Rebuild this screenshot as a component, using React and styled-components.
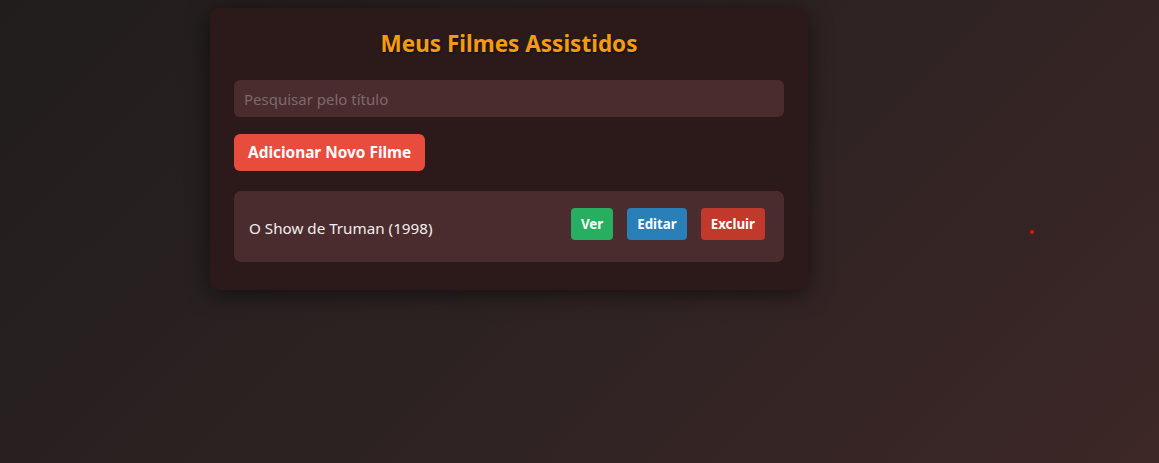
import React, { useState } from 'react'
import styled, { createGlobalStyle } from 'styled-components'

const GlobalStyle = createGlobalStyle`
    html, body {
        margin: 0;
        padding: 0;
        height: 100%;
    }
    body {
        background: linear-gradient(135deg, #211d1d 0%, #2c2222 45%, #3d2727 100%);
        font-family: "Noto Sans", "Open Sans", sans-serif;
        color: #f0e6e6;
    }
    #root {
        min-height: 100%;
    }
`

const Page = styled.div`
    position: relative;
    height: 463px;
    padding: 8px 0 0 210px;
    box-sizing: border-box;
`
const Container = styled.div`
    width: 598px;
    box-sizing: border-box;
    padding: 24px 24px 28px;
    background: #2c1a1b;
    border-radius: 9px;
    box-shadow: 0 4px 22px rgba(0, 0, 0, 0.55);
`
const Title = styled.h2`
    margin: -1px 0 23px;
    text-align: center;
    font-size: 22.5px;
    line-height: 26px;
    font-weight: 700;
    color: #f39c12;
    text-shadow: 1px 1px 2px rgba(0, 0, 0, 0.6);
`
const Search = styled.input`
    display: block;
    width: 100%;
    height: 37px;
    box-sizing: border-box;
    padding: 0 10px;
    border: none;
    border-radius: 6px;
    background: #4a2c2e;
    color: #f0e6e6;
    font-family: inherit;
    font-size: 15px;
    outline: none;
    &::placeholder {
        color: #7d6a6a;
    }
`
const AddButton = styled.button`
    display: block;
    margin: 17px 0 20px;
    height: 37px;
    padding: 0 14px;
    border: none;
    border-radius: 6px;
    background: #e74c3c;
    color: #fff;
    font-family: inherit;
    font-size: 15.4px;
    font-weight: 700;
    cursor: pointer;
`
const List = styled.div`
    display: flex;
    flex-direction: column;
    gap: 10px;
`
const Item = styled.div`
    display: flex;
    align-items: center;
    justify-content: space-between;
    height: 71px;
    box-sizing: border-box;
    padding: 0 19px 0 15px;
    background: #4a2c2e;
    border-radius: 7px;
`
const MovieName = styled.span`
    font-size: 15.2px;
    color: #f2ecec;
    padding-top: 2px;
`
const Actions = styled.div`
    display: flex;
    gap: 14px;
    margin-top: -6px;
`
const ActionButton = styled.button`
    height: 32px;
    padding: 0 10px;
    border: none;
    border-radius: 4px;
    background: ${props => props.color};
    color: #fff;
    font-family: inherit;
    font-size: 13.3px;
    font-weight: 700;
    cursor: pointer;
`
const Dot = styled.div`
    position: absolute;
    left: 1030px;
    top: 230px;
    width: 4px;
    height: 4px;
    border-radius: 50%;
    background: #e81010;
`

const movies = [
    { id: 1, title: 'O Show de Truman', year: 1998 },
]

const App = () => {
    const [query, setQuery] = useState('')
    const filtered = movies.filter(m => m.title.toLowerCase().includes(query.toLowerCase()))

    return (
        <>
            <GlobalStyle />
            <Page>
                <Container>
                    <Title>Meus Filmes Assistidos</Title>
                    <Search
                        placeholder="Pesquisar pelo título"
                        value={query}
                        onChange={e => setQuery(e.target.value)}
                    />
                    <AddButton>Adicionar Novo Filme</AddButton>
                    <List>
                        {filtered.map(movie => (
                            <Item key={movie.id}>
                                <MovieName>{movie.title} ({movie.year})</MovieName>
                                <Actions>
                                    <ActionButton color="#27ae60">Ver</ActionButton>
                                    <ActionButton color="#2980b9">Editar</ActionButton>
                                    <ActionButton color="#c0392b">Excluir</ActionButton>
                                </Actions>
                            </Item>
                        ))}
                    </List>
                </Container>
                <Dot />
            </Page>
        </>
    )
}

export default App
